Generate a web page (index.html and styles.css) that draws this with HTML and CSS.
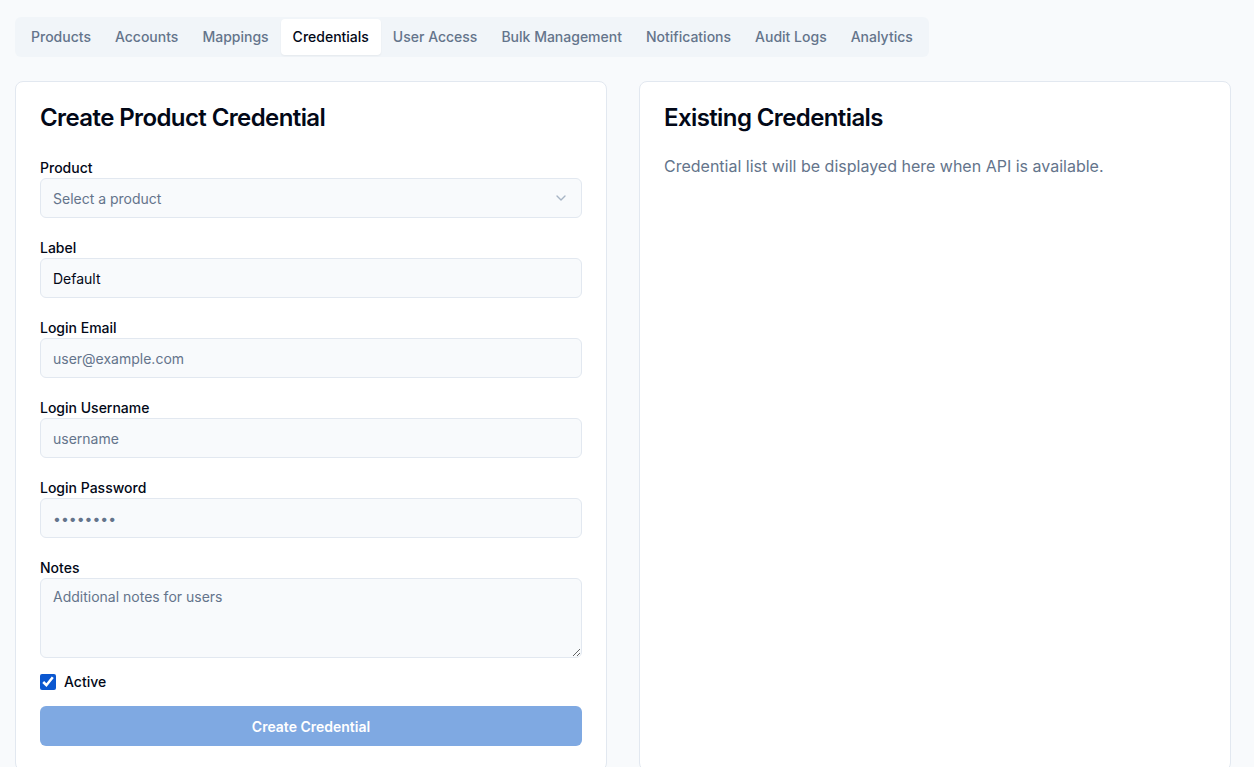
FILE: index.html
```html
<!DOCTYPE html>
<html lang="en">
<head>
<meta charset="utf-8">
<title>Credentials</title>
<link rel="stylesheet" href="styles.css">
</head>
<body>
<div class="page">
  <nav class="tabs">
    <button class="tab">Products</button>
    <button class="tab">Accounts</button>
    <button class="tab">Mappings</button>
    <button class="tab active">Credentials</button>
    <button class="tab">User Access</button>
    <button class="tab">Bulk Management</button>
    <button class="tab">Notifications</button>
    <button class="tab">Audit Logs</button>
    <button class="tab">Analytics</button>
  </nav>

  <div class="grid">
    <section class="card">
      <h2 class="card-title">Create Product Credential</h2>
      <form class="form">
        <div class="field">
          <label class="label">Product</label>
          <div class="select">
            <span class="placeholder">Select a product</span>
            <svg class="chev" width="16" height="16" viewBox="0 0 24 24" fill="none" stroke="currentColor" stroke-width="2" stroke-linecap="round" stroke-linejoin="round"><path d="m6 9 6 6 6-6"/></svg>
          </div>
        </div>
        <div class="field">
          <label class="label">Label</label>
          <input class="input" type="text" value="Default">
        </div>
        <div class="field">
          <label class="label">Login Email</label>
          <input class="input" type="email" placeholder="user@example.com">
        </div>
        <div class="field">
          <label class="label">Login Username</label>
          <input class="input" type="text" placeholder="username">
        </div>
        <div class="field">
          <label class="label">Login Password</label>
          <input class="input" type="password" placeholder="••••••••">
        </div>
        <div class="field">
          <label class="label">Notes</label>
          <textarea class="input textarea" placeholder="Additional notes for users"></textarea>
        </div>
        <label class="check">
          <input type="checkbox" checked>
          <span>Active</span>
        </label>
        <button type="button" class="submit">Create Credential</button>
      </form>
    </section>

    <section class="card">
      <h2 class="card-title">Existing Credentials</h2>
      <p class="muted">Credential list will be displayed here when API is available.</p>
    </section>
  </div>
</div>
</body>
</html>
```

FILE: styles.css
```css
* { box-sizing: border-box; }
html, body { margin: 0; padding: 0; }
body {
  background: #f8fafc;
  font-family: Inter, "Noto Sans", sans-serif;
  color: #020817;
}
.page {
  padding: 17px 23px 0 15px;
}
.tabs {
  display: inline-flex;
  align-items: center;
  background: #f1f5f9;
  border-radius: 6px;
  padding: 2px 4px;
  height: 40px;
  white-space: nowrap;
}
.tab {
  font-family: inherit;
  font-size: 14px;
  font-weight: 500;
  color: #64748b;
  background: transparent;
  border: 0;
  border-radius: 4px;
  padding: 0 12px;
  height: 36px;
  line-height: 20px;
  white-space: nowrap;
  cursor: pointer;
}
.tab.active {
  background: #ffffff;
  color: #020817;
  box-shadow: 0 1px 2px rgba(0,0,0,0.05);
}
.grid {
  display: grid;
  grid-template-columns: 592px 592px;
  gap: 32px;
  margin-top: 24px;
}
.card {
  background: #ffffff;
  border: 1px solid #e2e8f0;
  border-radius: 8px;
  padding: 22px 24px 24px;
}
.card-title {
  margin: 0;
  font-size: 24px;
  font-weight: 600;
  line-height: 28px;
  letter-spacing: -0.6px;
  color: #020817;
}
.form {
  margin-top: 26px;
}
.field {
  margin-bottom: 20px;
}
.label {
  display: block;
  font-size: 14px;
  font-weight: 500;
  line-height: 20px;
  margin-bottom: 0;
  color: #020817;
}
.input, .select {
  display: flex;
  align-items: center;
  width: 100%;
  height: 40px;
  background: #f8fafc;
  border: 1px solid #e2e8f0;
  border-radius: 6px;
  padding: 0 12px;
  font-family: inherit;
  font-size: 14px;
  color: #020817;
  outline: none;
}
.input::placeholder { color: #64748b; }
.select { justify-content: space-between; }
.placeholder { color: #64748b; }
.chev { color: #94a3b8; opacity: 0.8; }
.textarea {
  height: 80px;
  padding: 8px 12px;
  resize: vertical;
  line-height: 20px;
  display: block;
}
.check {
  display: flex;
  align-items: center;
  gap: 8px;
  font-size: 14px;
  font-weight: 500;
  line-height: 20px;
  margin-top: -6px;
}
.check input {
  width: 16px;
  height: 16px;
  margin: 0;
  accent-color: #0b57d0;
}
.submit {
  margin-top: 14px;
  width: 100%;
  height: 40px;
  border: 0;
  border-radius: 6px;
  background: #7fa9e2;
  color: #ffffff;
  font-family: inherit;
  font-size: 14px;
  font-weight: 600;
}
.muted {
  margin: 22px 0 0;
  font-size: 16px;
  line-height: 24px;
  color: #64748b;
}
```
